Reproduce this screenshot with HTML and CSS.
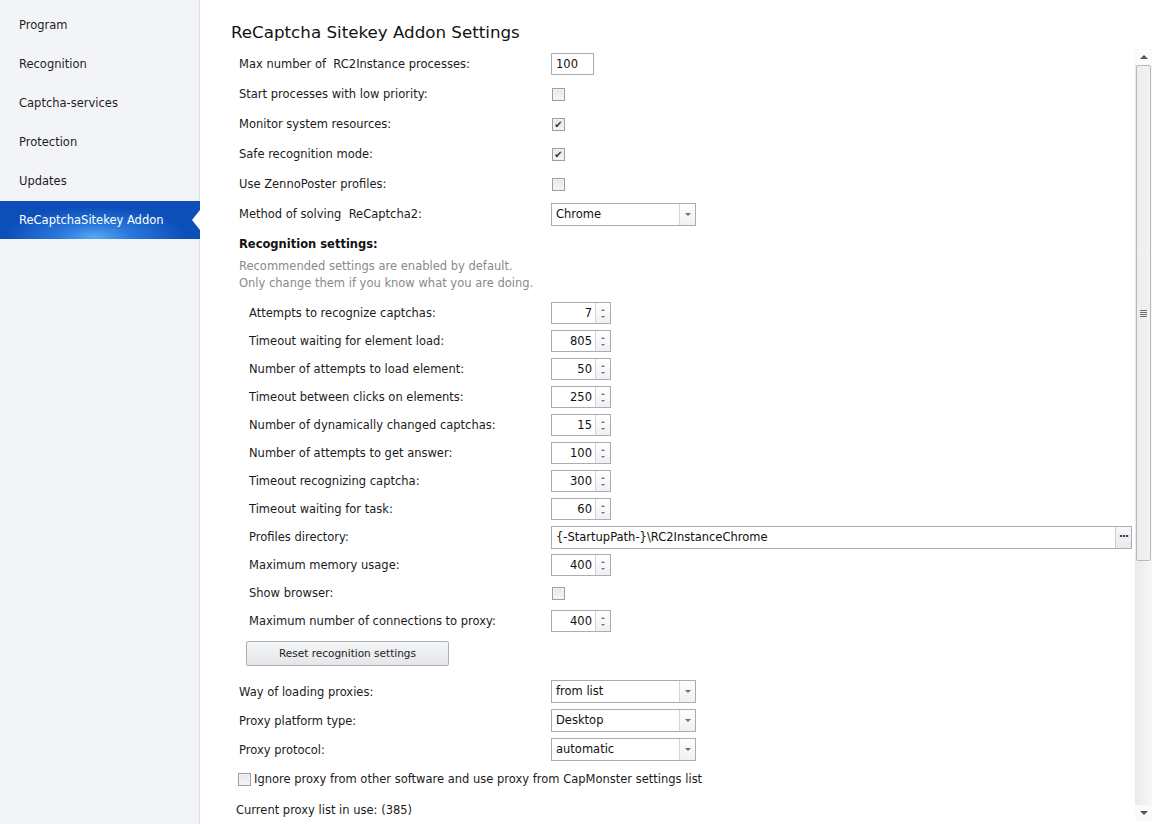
FILE: index.html
```html
<!DOCTYPE html>
<html>
<head>
<meta charset="utf-8">
<link rel="stylesheet" href="styles.css">
</head>
<body>
<div class="app">
  <nav class="sidebar">
    <div class="nav-item">Program</div>
    <div class="nav-item">Recognition</div>
    <div class="nav-item">Captcha-services</div>
    <div class="nav-item">Protection</div>
    <div class="nav-item">Updates</div>
    <div class="nav-item active">ReCaptchaSitekey Addon<span class="notch"></span></div>
  </nav>
  <main class="main">
    <h1 class="title">ReCaptcha Sitekey Addon Settings</h1>
    <div class="content">
      <div class="form">
        <div class="row"><span class="label">Max number of &nbsp;RC2Instance processes:</span><span class="textbox">100</span></div>
        <div class="row"><span class="label">Start processes with low priority:</span><span class="check"></span></div>
        <div class="row"><span class="label">Monitor system resources:</span><span class="check checked">&#10004;</span></div>
        <div class="row"><span class="label">Safe recognition mode:</span><span class="check checked">&#10004;</span></div>
        <div class="row"><span class="label">Use ZennoPoster profiles:</span><span class="check"></span></div>
        <div class="row"><span class="label">Method of solving &nbsp;ReCaptcha2:</span><span class="select"><span class="sel-text">Chrome</span><span class="sel-btn"><i class="down"></i></span></span></div>

        <div class="section-title">Recognition settings:</div>
        <div class="hint">Recommended settings are enabled by default.<br>Only change them if you know what you are doing.</div>

        <div class="sub">
          <div class="srow"><span class="label">Attempts to recognize captchas:</span><span class="spin"><span class="spin-val">7</span><span class="spin-btn"><i class="up"></i><i class="dn"></i></span></span></div>
          <div class="srow"><span class="label">Timeout waiting for element load:</span><span class="spin"><span class="spin-val">805</span><span class="spin-btn"><i class="up"></i><i class="dn"></i></span></span></div>
          <div class="srow"><span class="label">Number of attempts to load element:</span><span class="spin"><span class="spin-val">50</span><span class="spin-btn"><i class="up"></i><i class="dn"></i></span></span></div>
          <div class="srow"><span class="label">Timeout between clicks on elements:</span><span class="spin"><span class="spin-val">250</span><span class="spin-btn"><i class="up"></i><i class="dn"></i></span></span></div>
          <div class="srow"><span class="label">Number of dynamically changed captchas:</span><span class="spin"><span class="spin-val">15</span><span class="spin-btn"><i class="up"></i><i class="dn"></i></span></span></div>
          <div class="srow"><span class="label">Number of attempts to get answer:</span><span class="spin"><span class="spin-val">100</span><span class="spin-btn"><i class="up"></i><i class="dn"></i></span></span></div>
          <div class="srow"><span class="label">Timeout recognizing captcha:</span><span class="spin"><span class="spin-val">300</span><span class="spin-btn"><i class="up"></i><i class="dn"></i></span></span></div>
          <div class="srow"><span class="label">Timeout waiting for task:</span><span class="spin"><span class="spin-val">60</span><span class="spin-btn"><i class="up"></i><i class="dn"></i></span></span></div>
          <div class="srow"><span class="label">Profiles directory:</span><span class="path"><span class="path-text">{-StartupPath-}\RC2InstanceChrome</span><span class="path-btn">&middot;&middot;&middot;</span></span></div>
          <div class="srow"><span class="label">Maximum memory usage:</span><span class="spin"><span class="spin-val">400</span><span class="spin-btn"><i class="up"></i><i class="dn"></i></span></span></div>
          <div class="srow"><span class="label">Show browser:</span><span class="check"></span></div>
          <div class="srow"><span class="label">Maximum number of connections to proxy:</span><span class="spin"><span class="spin-val">400</span><span class="spin-btn"><i class="up"></i><i class="dn"></i></span></span></div>
          <div class="btn-row"><span class="button">Reset recognition settings</span></div>
        </div>

        <div class="prow"><span class="label">Way of loading proxies:</span><span class="select"><span class="sel-text">from list</span><span class="sel-btn"><i class="down"></i></span></span></div>
        <div class="prow"><span class="label">Proxy platform type:</span><span class="select"><span class="sel-text">Desktop</span><span class="sel-btn"><i class="down"></i></span></span></div>
        <div class="prow"><span class="label">Proxy protocol:</span><span class="select"><span class="sel-text">automatic</span><span class="sel-btn"><i class="down"></i></span></span></div>
        <div class="ignore"><span class="check"></span><span>Ignore proxy from other software and use proxy from CapMonster settings list</span></div>
        <div class="current">Current proxy list in use: (385)</div>
      </div>
      <div class="scrollbar">
        <div class="sb-arrow"><i class="sb-up"></i></div>
        <div class="sb-thumb"><span class="grip"></span></div>
        <div class="sb-track"></div>
        <div class="sb-arrow"><i class="sb-down"></i></div>
      </div>
    </div>
  </main>
</div>
</body>
</html>
```

FILE: styles.css
```css
html, body {
  margin: 0;
  padding: 0;
  background: #ffffff;
  font-family: "DejaVu Sans", Tahoma, sans-serif;
  font-size: 11.5px;
  color: #1b1b1b;
}
.app {
  display: flex;
  width: 1153px;
  height: 824px;
  overflow: hidden;
}
.sidebar {
  width: 200px;
  flex: none;
  background: #f3f4f8;
  border-right: 1px solid #dcdde2;
  padding-top: 6px;
  box-sizing: border-box;
}
.nav-item {
  position: relative;
  height: 39px;
  line-height: 39px;
  padding-left: 19px;
  font-size: 11.5px;
  color: #1e1e1e;
  white-space: nowrap;
}
.nav-item.active {
  color: #ffffff;
  height: 38px;
  line-height: 38px;
  background: radial-gradient(ellipse 90px 30px at 95px 36px, #5aa6f4 0%, #2a78dc 40%, #0d4fb8 100%);
  margin-right: -1px;
}
.notch {
  position: absolute;
  right: 0;
  top: 9px;
  width: 0;
  height: 0;
  border-top: 10px solid transparent;
  border-bottom: 10px solid transparent;
  border-right: 8px solid #ffffff;
}
.main {
  flex: 1;
  display: flex;
  flex-direction: column;
  min-width: 0;
}
.title {
  margin: 0;
  padding: 22px 0 0 31px;
  height: 25px;
  font-weight: normal;
  font-size: 16.7px;
  color: #111;
  white-space: nowrap;
}
.content {
  flex: 1;
  display: flex;
  min-height: 0;
}
.form {
  flex: 1;
  padding-left: 39px;
  padding-top: 2px;
}
.row {
  display: flex;
  align-items: center;
  height: 30px;
}
.label {
  width: 312px;
  flex: none;
  white-space: nowrap;
}
.textbox {
  width: 43px;
  height: 22px;
  box-sizing: border-box;
  border: 1px solid #a9adb3;
  padding-left: 4px;
  line-height: 20px;
  color: #111;
}
.check {
  width: 13px;
  height: 13px;
  box-sizing: border-box;
  border: 1px solid #9a9ea5;
  background: linear-gradient(#e6e7ea, #f6f6f7);
  margin-left: 1px;
  font-size: 10px;
  line-height: 11px;
  text-align: center;
  color: #333;
  box-shadow: inset 0 0 0 1px #f2f2f2;
}
.select {
  display: flex;
  width: 145px;
  height: 23px;
  box-sizing: border-box;
  border: 1px solid #a9adb3;
}
.sel-text {
  flex: 1;
  padding-left: 4px;
  line-height: 21px;
  color: #111;
}
.sel-btn {
  width: 15px;
  border-left: 1px solid #d2d4d8;
  background: linear-gradient(#ffffff, #eef0f3);
  display: flex;
  align-items: center;
  justify-content: center;
}
.down {
  width: 0;
  height: 0;
  border-left: 3px solid transparent;
  border-right: 3px solid transparent;
  border-top: 3px solid #6d6f73;
}
.section-title {
  font-weight: bold;
  margin-top: 8px;
  height: 21px;
  line-height: 14px;
  color: #111;
}
.hint {
  color: #8a8a8a;
  line-height: 17px;
  margin-top: 0;
}
.sub {
  padding-left: 10px;
  margin-top: 7px;
}
.sub .label {
  width: 302px;
}
.srow {
  display: flex;
  align-items: center;
  height: 28px;
}
.spin {
  display: flex;
  width: 60px;
  height: 22px;
  box-sizing: border-box;
  border: 1px solid #a9adb3;
}
.spin-val {
  flex: 1;
  text-align: right;
  padding-right: 3px;
  line-height: 20px;
  color: #111;
}
.spin-btn {
  width: 14px;
  border-left: 1px solid #d2d4d8;
  background: linear-gradient(#ffffff, #eef0f3);
  display: flex;
  flex-direction: column;
  align-items: center;
  justify-content: center;
  gap: 5px;
}
.up {
  width: 0;
  height: 0;
  border-left: 2.5px solid transparent;
  border-right: 2.5px solid transparent;
  border-bottom: 2.5px solid #6f7175;
}
.dn {
  width: 0;
  height: 0;
  border-left: 2.5px solid transparent;
  border-right: 2.5px solid transparent;
  border-top: 2.5px solid #6f7175;
}
.path {
  display: flex;
  width: 581px;
  height: 23px;
  box-sizing: border-box;
  border: 1px solid #a9adb3;
}
.path-text {
  flex: 1;
  padding-left: 4px;
  line-height: 21px;
  color: #111;
}
.path-btn {
  width: 15px;
  border-left: 1px solid #c8cbd0;
  background: linear-gradient(#f7f8fa, #e6e9ee);
  text-align: center;
  line-height: 19px;
  font-weight: bold;
  color: #333;
  font-size: 11px;
  letter-spacing: -1px;
}
.btn-row {
  padding: 6px 0 11px 0;
  margin-left: -3px;
}
.button {
  display: inline-block;
  width: 203px;
  height: 25px;
  box-sizing: border-box;
  border: 1px solid #acb0b6;
  border-radius: 2px;
  background: linear-gradient(#f4f5f6, #e4e6e9);
  text-align: center;
  line-height: 23px;
  font-size: 10.5px;
  color: #222;
}
.prow {
  display: flex;
  align-items: center;
  height: 29px;
}
.ignore {
  display: flex;
  align-items: center;
  gap: 3px;
  height: 30px;
  margin-left: -2px;
}
.current {
  margin-left: -3px;
  margin-top: 1px;
  line-height: 30px;
}
.scrollbar {
  width: 17px;
  flex: none;
  margin-right: 1px;
  margin-top: 2px;
  display: flex;
  flex-direction: column;
  background: linear-gradient(90deg, #eaeaea, #f7f7f7);
  height: 772px;
}
.sb-arrow {
  height: 16px;
  display: flex;
  align-items: center;
  justify-content: center;
  background: #fafafa;
}
.sb-up {
  width: 0; height: 0;
  border-left: 4px solid transparent;
  border-right: 4px solid transparent;
  border-bottom: 4px solid #555;
}
.sb-down {
  width: 0; height: 0;
  border-left: 4px solid transparent;
  border-right: 4px solid transparent;
  border-top: 4px solid #555;
}
.sb-thumb {
  height: 496px;
  margin: 0 1px 0 1px;
  box-sizing: border-box;
  border: 1px solid #b7b9bd;
  border-radius: 2px;
  background: linear-gradient(90deg, #eeeeee, #f1f1f1);
  display: flex;
  align-items: center;
  justify-content: center;
}
.grip {
  width: 7px;
  height: 7px;
  background: repeating-linear-gradient(#6c6c6c 0 1px, transparent 1px 2px);
}
.sb-track {
  flex: 1;
}
```
